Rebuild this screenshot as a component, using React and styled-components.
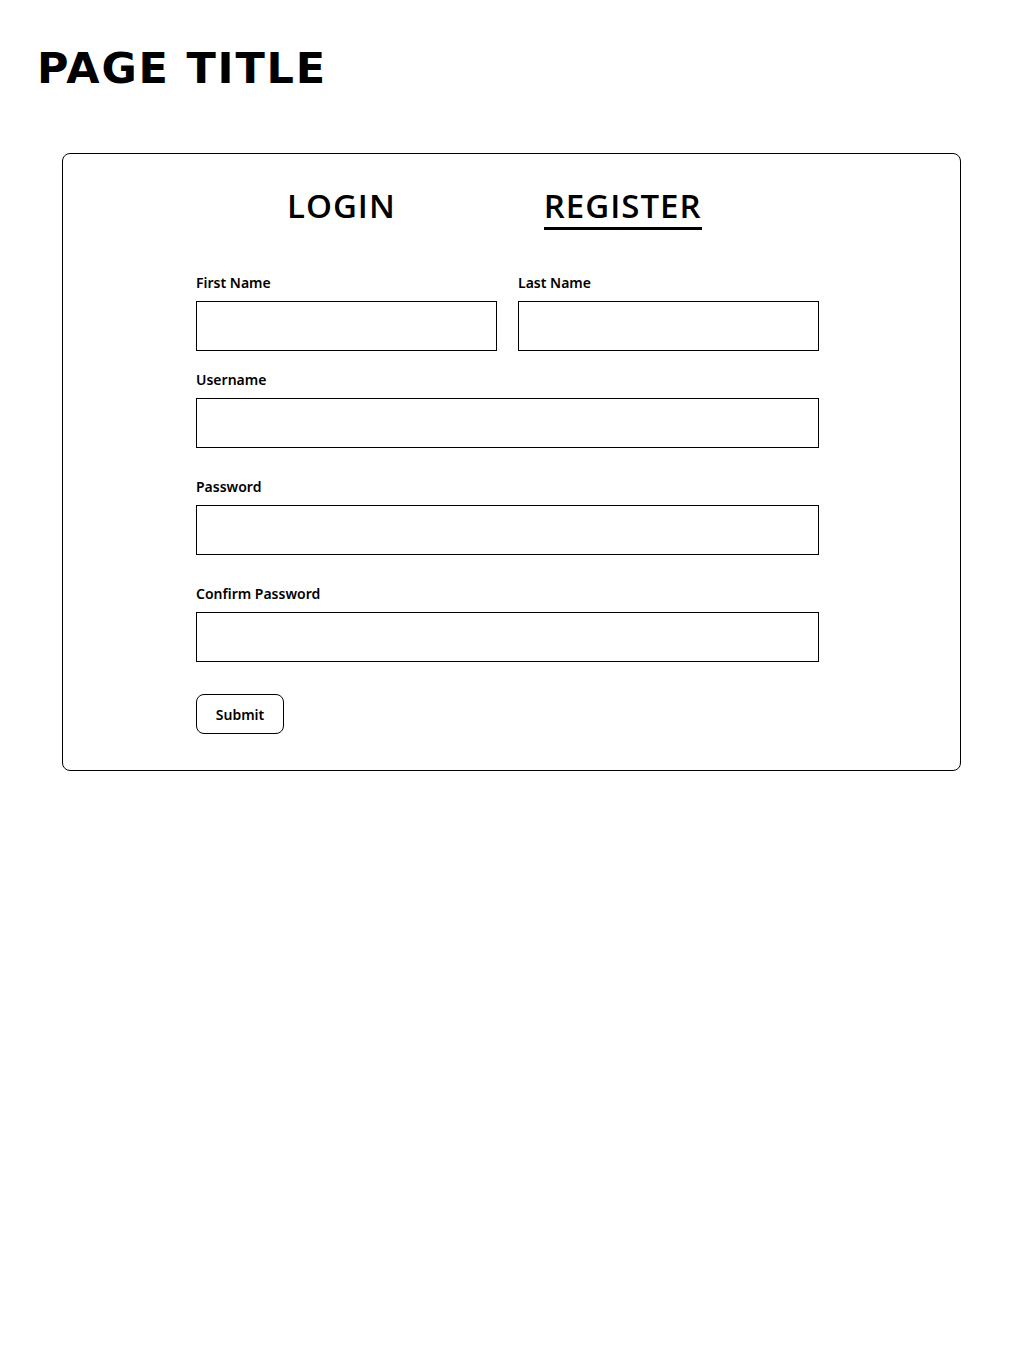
import React, { useState } from "react";
import styled, { createGlobalStyle } from "styled-components";

const GlobalStyle = createGlobalStyle`
  body {
    margin: 0;
    background: #ffffff;
    color: #000000;
    font-family: "Noto Sans", "Open Sans", sans-serif;
  }
`;

const Page = styled.div`
  padding: 40px 62px 0 37px;
`;

const PageTitle = styled.h1`
  margin: 0 0 57px 0;
  font-family: "DejaVu Sans", sans-serif;
  font-weight: 700;
  font-size: 43px;
  line-height: 56px;
  letter-spacing: 1.8px;
`;

const Card = styled.div`
  margin-left: 25px;
  width: 899px;
  box-sizing: border-box;
  border: 1px solid #000;
  border-radius: 8px;
  padding: 30px 0 36px 133px;
`;

const Tabs = styled.div`
  display: flex;
  gap: 148px;
  padding-left: 91px;
  margin-bottom: 43px;
`;

const Tab = styled.button`
  background: none;
  border: 0;
  padding: 0;
  font-family: "Open Sans", sans-serif;
  font-weight: 600;
  font-size: 33px;
  line-height: 43px;
  letter-spacing: 1px;
  color: #000;
  cursor: pointer;
  border-bottom: 3px solid ${(p) => (p.$active ? "#000" : "transparent")};
`;

const Form = styled.form`
  width: 623px;
  display: flex;
  flex-direction: column;
`;

const Row = styled.div`
  display: flex;
  gap: 21px;
  margin-bottom: ${(p) => p.$gap || 30}px;
`;

const Field = styled.div`
  flex: 1;
  display: flex;
  flex-direction: column;
`;

const Label = styled.label`
  font-size: 14px;
  font-weight: 600;
  line-height: 20px;
  margin-bottom: 8px;
`;

const Input = styled.input`
  height: 50px;
  box-sizing: border-box;
  border: 1px solid #000;
  border-radius: 0;
  padding: 0 10px;
  font-family: inherit;
  font-size: 15px;
  outline: none;
`;

const Submit = styled.button`
  align-self: flex-start;
  width: 88px;
  height: 40px;
  padding: 0;
  background: #fff;
  border: 1px solid #000;
  border-radius: 8px;
  font-family: "Noto Sans", sans-serif;
  font-weight: 600;
  font-size: 14px;
  color: #000;
  cursor: pointer;
`;

export default function App() {
  const [tab, setTab] = useState("register");

  return (
    <Page>
      <GlobalStyle />
      <PageTitle>PAGE TITLE</PageTitle>
      <Card>
        <Tabs>
          <Tab $active={tab === "login"} onClick={() => setTab("login")}>
            LOGIN
          </Tab>
          <Tab $active={tab === "register"} onClick={() => setTab("register")}>
            REGISTER
          </Tab>
        </Tabs>
        <Form onSubmit={(e) => e.preventDefault()}>
          <Row $gap={19}>
            <Field>
              <Label>First Name</Label>
              <Input type="text" />
            </Field>
            <Field>
              <Label>Last Name</Label>
              <Input type="text" />
            </Field>
          </Row>
          <Row $gap={29}>
            <Field>
              <Label>Username</Label>
              <Input type="text" />
            </Field>
          </Row>
          <Row $gap={29}>
            <Field>
              <Label>Password</Label>
              <Input type="password" />
            </Field>
          </Row>
          <Row $gap={32}>
            <Field>
              <Label>Confirm Password</Label>
              <Input type="password" />
            </Field>
          </Row>
          <Submit type="submit">Submit</Submit>
        </Form>
      </Card>
    </Page>
  );
}
